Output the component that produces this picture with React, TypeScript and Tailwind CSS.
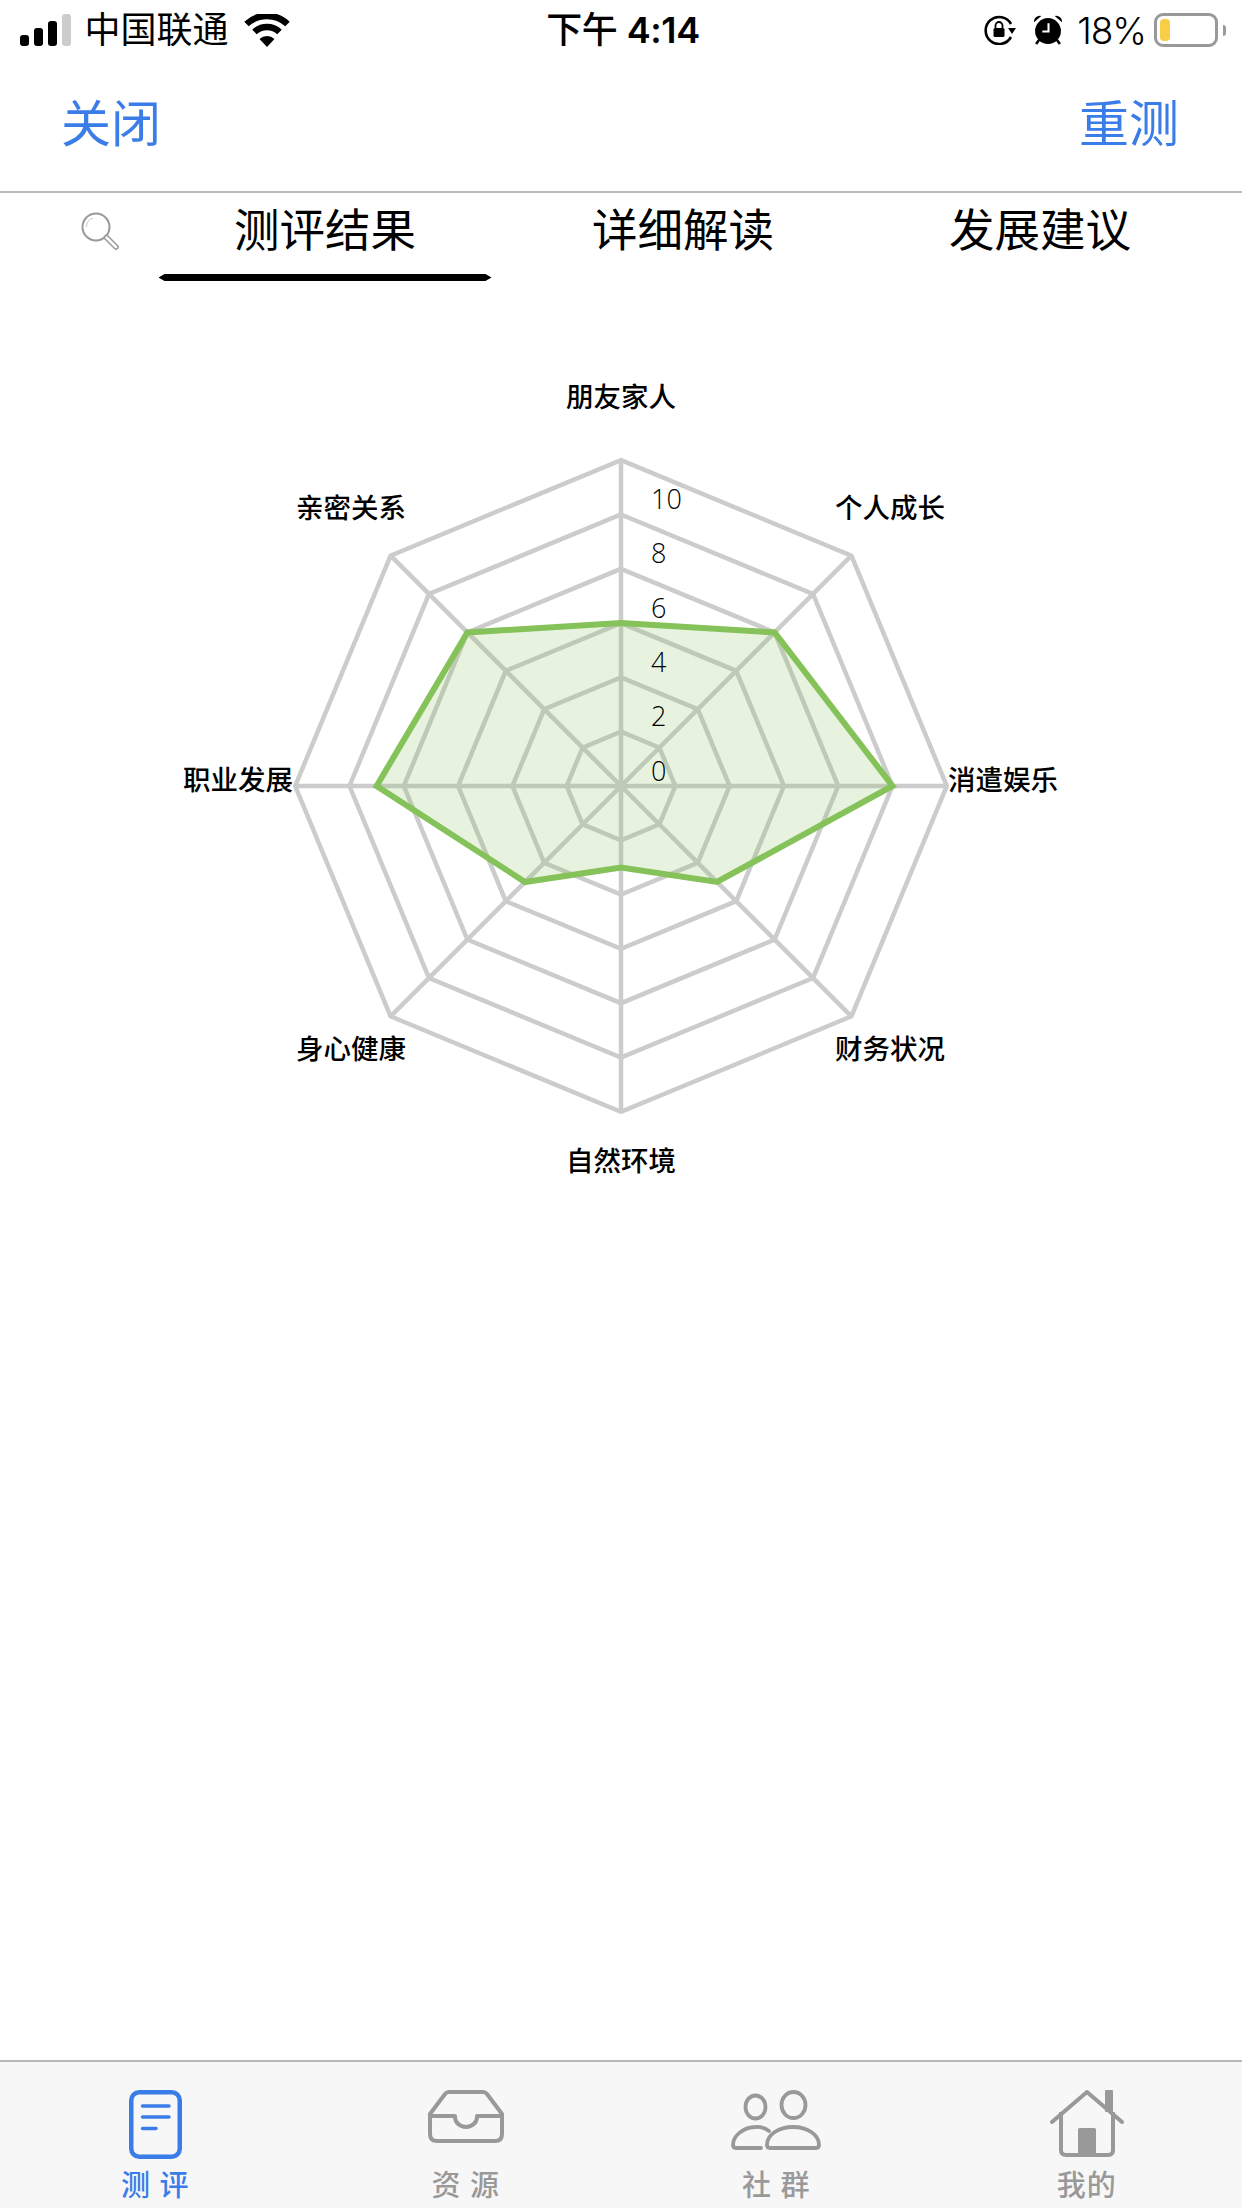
const BLUE = '#3b7de8';
const CX = 621;
const CY = 786;
const STEP = 54.3;

// eight axes clockwise from the top, values out of 6 rings (2 per ring)
const AXES = [
  { label: '朋友家人', value: 6, x: 621, y: 407, anchor: 'middle' },
  { label: '个人成长', value: 8, x: 890, y: 518, anchor: 'middle' },
  { label: '消遣娱乐', value: 10, x: 948, y: 790, anchor: 'start' },
  { label: '财务状况', value: 5, x: 890, y: 1059, anchor: 'middle' },
  { label: '自然环境', value: 3, x: 621, y: 1171, anchor: 'middle' },
  { label: '身心健康', value: 5, x: 351, y: 1059, anchor: 'middle' },
  { label: '职业发展', value: 9, x: 293, y: 790, anchor: 'end' },
  { label: '亲密关系', value: 8, x: 351, y: 518, anchor: 'middle' },
];

const TICKS = [
  { text: '0', y: 781 },
  { text: '2', y: 726 },
  { text: '4', y: 672 },
  { text: '6', y: 618 },
  { text: '8', y: 563 },
  { text: '10', y: 509 },
];

function point(i: number, r: number) {
  const a = (i * Math.PI) / 4;
  return [CX + r * Math.sin(a), CY - r * Math.cos(a)];
}

function ring(r: (i: number) => number) {
  return AXES.map((_, i) => point(i, r(i)).map((n) => n.toFixed(1)).join(',')).join(' ');
}

function RadarChart() {
  return (
    <svg className="block" width="1242" height="920" viewBox="0 282 1242 920">
      {[1, 2, 3, 4, 5, 6].map((n) => (
        <polygon key={n} points={ring(() => n * STEP)} fill="none" stroke="#cccccc" strokeWidth="4.5" />
      ))}
      {AXES.map((_, i) => {
        const [x, y] = point(i, 6 * STEP);
        return <line key={i} x1={CX} y1={CY} x2={x} y2={y} stroke="#cccccc" strokeWidth="4.5" />;
      })}
      <polygon
        points={ring((i) => (AXES[i].value / 2) * STEP)}
        fill="#85c25a"
        fillOpacity="0.2"
        stroke="#85c25a"
        strokeWidth="6"
      />
      {TICKS.map((t) => (
        <text key={t.text} x="651" y={t.y} fontSize="27" fontWeight="300" fill="#000000" className="[font-family:'Open_Sans',sans-serif]">
          {t.text}
        </text>
      ))}
      {AXES.map((a) => (
        <text key={a.label} x={a.x} y={a.y} fontSize="27.5" fontWeight="500" fill="#000000" textAnchor={a.anchor as 'middle'}>
          {a.label}
        </text>
      ))}
    </svg>
  );
}

function StatusBar() {
  return (
    <div className="flex h-[60px] items-center text-[36px] leading-none text-black">
      <div className="flex flex-1 items-center pl-[20px]">
        <div className="flex items-end gap-[5.5px] h-[32px]">
          <span className="w-[8.5px] h-[11px] rounded-[3px] bg-black" />
          <span className="w-[8.5px] h-[18px] rounded-[3px] bg-black" />
          <span className="w-[8.5px] h-[25px] rounded-[3px] bg-black" />
          <span className="w-[8.5px] h-[32px] rounded-[3px] bg-[#cccccc]" />
        </div>
        <span className="ml-[14px]">中国联通</span>
        <svg className="ml-[15px]" width="46" height="33" viewBox="0 0 46 33">
          <path d="M2.5 10 A30 30 0 0 1 43.5 10" fill="none" stroke="black" strokeWidth="6.5" />
          <path d="M10.5 18 A18 18 0 0 1 35.5 18" fill="none" stroke="black" strokeWidth="6.5" />
          <path d="M15.5 25 A11 11 0 0 1 30.5 25 L23 33 Z" fill="black" />
        </svg>
      </div>
      <span className="text-[36px] font-medium tracking-[-0.4px]">
        下午 <span className="font-semibold">4:14</span>
      </span>
      <div className="flex flex-1 items-center justify-end pr-[16px]">
        <svg width="32" height="30" viewBox="0 0 32 30">
          <path d="M27 22 A13.5 13.5 0 1 1 27 9" fill="none" stroke="black" strokeWidth="2.6" />
          <path d="M24 13 L32 13 L28 19 Z" fill="black" />
          <rect x="9.5" y="13" width="11" height="9" rx="1.5" fill="black" />
          <path d="M11.5 13 V10.5 A3.5 3.5 0 0 1 18.5 10.5 V13" fill="none" stroke="black" strokeWidth="1.8" />
        </svg>
        <svg className="ml-[17px]" width="30" height="30" viewBox="0 0 29 29">
          <circle cx="14.5" cy="15.5" r="12.5" fill="black" />
          <path d="M1 7 A5.5 5.5 0 0 1 8 1 Z M28 7 A5.5 5.5 0 0 0 21 1 Z" fill="black" />
          <path d="M6 24 L3 28 M23 24 L26 28" stroke="black" strokeWidth="2.5" />
          <path d="M15 8 V16 H9" fill="none" stroke="white" strokeWidth="2" />
        </svg>
        <span className="ml-[14px] text-[37px] font-light tracking-[-1px]">18%</span>
        <div className="ml-[8px] flex items-center">
          <div className="flex w-[64px] h-[34px] rounded-[9px] border-[3px] border-[#999999] p-[3px]">
            <span className="w-[10px] rounded-[4px] bg-[#f7ce46]" />
          </div>
          <span className="ml-[5px] w-[3px] h-[11px] rounded-r-[3px] bg-[#999999]" />
        </div>
      </div>
    </div>
  );
}

function SearchIcon() {
  return (
    <svg width="38" height="38" viewBox="0 0 38 38">
      <circle cx="15" cy="15" r="13.5" fill="none" stroke="#999999" strokeWidth="2" />
      <path d="M5.5 15 A9.5 9.5 0 0 1 12 6" fill="none" stroke="#cccccc" strokeWidth="1" />
      <path d="M25.5 25.5 L35 35" stroke="#999999" strokeWidth="5.5" strokeLinecap="round" />
      <path d="M25.5 25.5 L35 35" stroke="white" strokeWidth="2.5" strokeLinecap="round" />
    </svg>
  );
}

function DocIcon() {
  return (
    <svg width="53" height="69" viewBox="0 0 53 69" fill="none" stroke={BLUE} strokeLinecap="round">
      <rect x="2.25" y="2.25" width="48.5" height="64.5" rx="8" strokeWidth="4.5" />
      <path d="M13.5 16 H40 M13.5 27 H40 M13.5 38.5 H27" strokeWidth="3.5" />
    </svg>
  );
}

function InboxIcon() {
  return (
    <svg width="76" height="53" viewBox="0 0 76 53" fill="none" stroke="#999999" strokeWidth="4" strokeLinejoin="round">
      <path d="M2 24 L17 4 Q18.5 2 21 2 H55 Q57.5 2 59 4 L74 24 V44 Q74 51 67 51 H9 Q2 51 2 44 Z" />
      <path d="M2 26 H27 V27 A11 10 0 0 0 49 27 V26 H74" />
    </svg>
  );
}

function PeopleIcon() {
  return (
    <svg width="90" height="60" viewBox="0 0 90 60" fill="none" stroke="#999999" strokeWidth="3.8" strokeLinecap="round">
      <ellipse cx="24.5" cy="17" rx="10" ry="11.5" />
      <ellipse cx="62.5" cy="15" rx="12" ry="13" />
      <path d="M38 41 A20 20 0 0 0 25 37 C12 37 2 46 2 55 Q2 58 5 58 H30" />
      <path d="M36 55 C36 45 47 37 62 37 C77 37 88 45 88 55 Q88 58 85 58 H39 Q36 58 36 55 Z" />
    </svg>
  );
}

function HouseIcon() {
  return (
    <svg width="74" height="67" viewBox="0 0 74 67" fill="none" stroke="#999999">
      <path d="M2 32 L37 2 L72 32" strokeWidth="4" strokeLinecap="round" strokeLinejoin="round" />
      <path d="M11 22 V60 Q11 65 16 65 H58 Q63 65 63 60 V22" strokeWidth="4" />
      <rect x="55" y="0" width="8" height="22" rx="1" fill="#999999" stroke="none" />
      <rect x="28" y="38" width="18" height="27" rx="1.5" fill="#999999" stroke="none" />
    </svg>
  );
}

const TABS = [
  { label: '测 评', icon: <DocIcon />, active: true },
  { label: '资 源', icon: <InboxIcon />, active: false },
  { label: '社 群', icon: <PeopleIcon />, active: false },
  { label: '我的', icon: <HouseIcon />, active: false },
];

export default function App() {
  return (
    <div className="flex h-[2208px] w-[1242px] flex-col overflow-hidden bg-white [font-family:Inter,'Noto_Sans_CJK_SC',sans-serif]">
      <StatusBar />

      <div className="flex h-[133px] items-center justify-between border-b-2 border-[#b8b8b8] pl-[61px] pr-[63px] pb-[4px] text-[50px] leading-none text-[#3b7de8]">
        <span>关闭</span>
        <span>重测</span>
      </div>

      <div className="flex h-[89px] text-[45.5px] leading-none text-black">
        <div className="flex w-[146px] pt-[19px] pl-[81px]">
          <SearchIcon />
        </div>
        <div className="flex w-[358px] flex-col items-center pb-[1px]">
          <span className="mt-[15px]">测评结果</span>
          <span className="mt-auto h-[7px] w-[333px] bg-black [clip-path:polygon(0_50%,6px_0,calc(100%_-_6px)_0,100%_50%,calc(100%_-_6px)_100%,6px_100%)]" />
        </div>
        <div className="flex w-[358px] justify-center pt-[15px]">详细解读</div>
        <div className="flex w-[358px] justify-center pt-[15px] pr-[2px]">发展建议</div>
      </div>

      <div className="flex-1">
        <RadarChart />
      </div>

      <div className="grid h-[148px] grid-cols-4 border-t-2 border-[#b8b8b8] bg-[#f7f7f7] pt-[28px]">
        {TABS.map((t) => (
          <div key={t.label} className="flex flex-col items-center">
            <div className="flex h-[69px] items-start">{t.icon}</div>
            <span
              className={`mt-[12px] text-[29px] font-medium leading-[30px] tracking-[1px] ${t.active ? 'text-[#3b7de8]' : 'text-[#999999]'}`}
            >
              {t.label}
            </span>
          </div>
        ))}
      </div>
    </div>
  );
}
